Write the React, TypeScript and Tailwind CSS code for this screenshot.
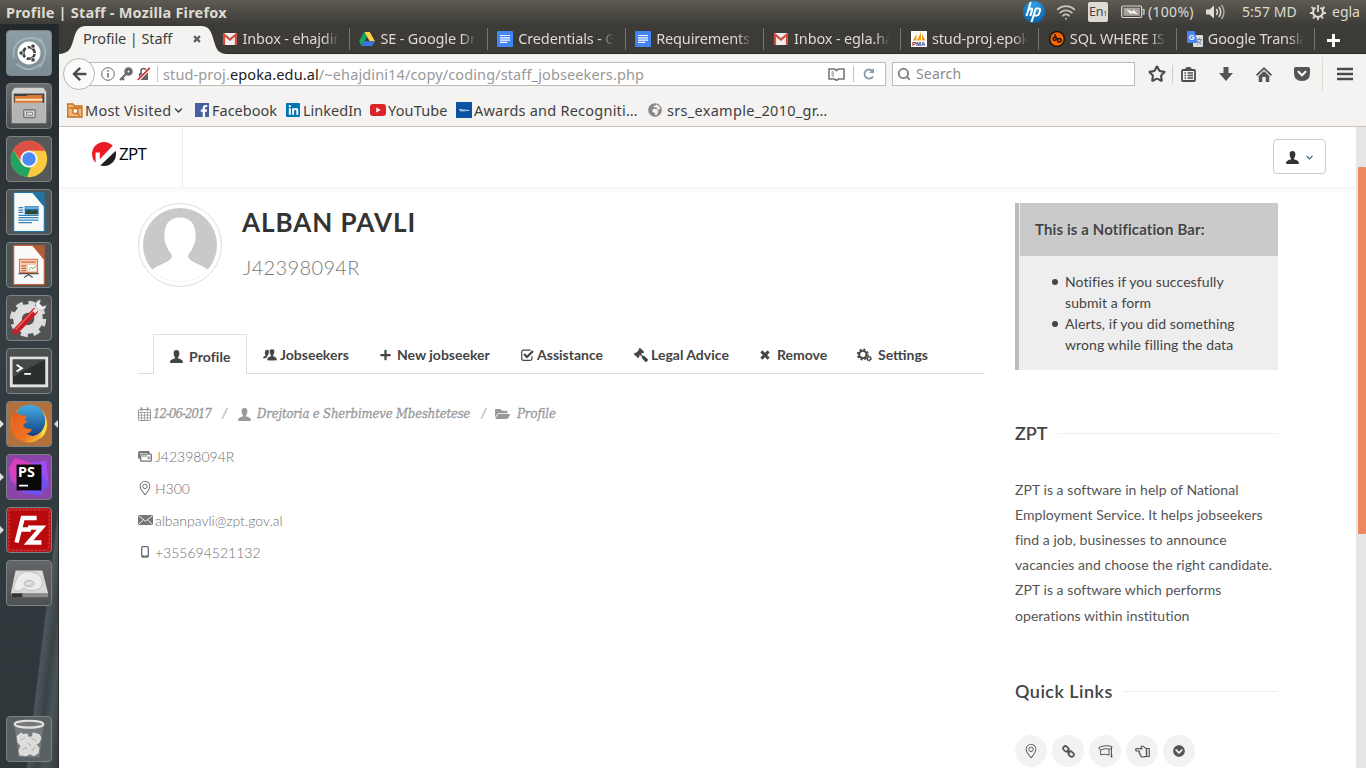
import React from "react";
import {
  FaArrowLeft, FaChevronCircleDown, FaChevronDown, FaFacebookF, FaFolderOpen,
  FaGavel, FaLinkedinIn, FaPlus, FaGlobeAfrica,
} from "react-icons/fa";
import { SlLocationPin } from "react-icons/sl";
import { Search, Star, Wifi } from "lucide-react";

const UI = "font-['Noto_Sans',sans-serif]";

function UserIcon({ className }: { className: string }) {
  return (
    <svg viewBox="0 0 13 13" className={className} fill="currentColor">
      <path d="M6.500 0C8.600 0 9.500 1.300 9.400 3.200C9.300 5.200 8.500 7 7.900 7.400V8.300C9.500 8.900 12.900 9.600 13 12C13 12.700 12.300 13 11.300 13H1.700C.7 13 0 12.700 0 12C.1 9.600 3.500 8.900 5.100 8.300V7.400C4.500 7 3.700 5.200 3.600 3.200C3.500 1.300 4.400 0 6.500 0Z" />
    </svg>
  );
}

function UsersIcon() {
  return (
    <svg viewBox="0 0 14 12" className="h-[12px] w-[14px]" fill="currentColor">
      <path d="M4 .8C5.600 .8 6 1.500 5.800 3C5.900 4.500 5.500 5.500 5 6.200C4.500 6.800 3.500 7.500 3.300 9.300H0C0 7.500 1.500 7 2.600 6.400C1.600 5 1.400 .8 4 .8Z" />
      <path d="M9 0C11.300 0 11.900 1.700 11.500 3.600C11.300 4.700 10.900 5.500 10.300 6.200V7C11.600 7.800 14 8 14 10.800C13.800 11.600 13 11.700 12 11.700H6C4.800 11.700 4.200 11.600 4 10.800C4 8 6.600 7.800 7.700 7V6.200C7.100 5.500 6.700 4.700 6.500 3.600C6.100 1.700 6.700 0 9 0Z" stroke="#fff" strokeWidth=".5" />
    </svg>
  );
}

function CrossIcon({ className }: { className: string }) {
  return (
    <svg viewBox="0 0 11 11" className={className} stroke="currentColor" strokeWidth="3.200">
      <path d="M1.500 1.500L9.500 9.500M9.500 1.500L1.500 9.500" />
    </svg>
  );
}

function GearsIcon() {
  return (
    <svg viewBox="0 0 15 14" className="h-[14px] w-[15px]" fill="none" stroke="currentColor">
      <circle cx="5.800" cy="6.500" r="3.600" strokeWidth="1.900" />
      <circle cx="5.800" cy="6.500" r="5" strokeWidth="1.900" strokeDasharray="2.100 1.827" />
      <circle cx="12" cy="10.600" r="1.700" strokeWidth="1.200" fill="#fff" />
      <circle cx="12" cy="10.600" r="2.500" strokeWidth="1" strokeDasharray="1.200 1.418" />
    </svg>
  );
}

function CalendarIcon() {
  return (
    <svg viewBox="0 0 13 14" className="h-[14px] w-[13px]" fill="none" stroke="currentColor">
      <rect x=".5" y="2.500" width="12" height="11" rx=".7" />
      <path d="M.5 5.500H12.500M.5 8.200H12.500M.5 10.900H12.500M3.500 5.500V13.500M6.500 5.500V13.500M9.500 5.500V13.500" strokeWidth=".8" />
      <path d="M3.500 .3V4M9.500 .3V4" strokeWidth="1.700" />
    </svg>
  );
}

function CheckBoxIcon() {
  return (
    <svg viewBox="0 0 13 12" className="h-[12px] w-[13px]" fill="none" stroke="currentColor">
      <path d="M11 7.200V9.500Q11 11.300 9.200 11.300H2.500Q.7 11.300 .7 9.500V2.900Q.7 1.100 2.500 1.100H9.500" strokeWidth="1.200" />
      <path d="M3 5L6 8L12 2" strokeWidth="2.200" />
    </svg>
  );
}

function WalletIcon() {
  return (
    <svg viewBox="0 0 14 11" className="h-[11px] w-[14px]" fill="none" stroke="#777">
      <path d="M1 7.500V2Q1 1 2 1H10.500V3" strokeWidth="1.900" />
      <rect x="2.700" y="3.200" width="10.600" height="7" rx=".8" strokeWidth="1.300" />
      <path d="M4 5H9" />
      <circle cx="10.800" cy="6.800" r="1.100" strokeWidth=".9" />
    </svg>
  );
}

function MailIcon() {
  return (
    <svg viewBox="0 0 15 10" className="h-[10px] w-[15px]">
      <rect width="15" height="10" fill="#777" />
      <path d="M.5 .7L7.500 6.200L14.500 .7M.5 9.500L5.300 5M14.500 9.500L9.700 5" fill="none" stroke="#fff" strokeWidth=".9" />
    </svg>
  );
}

function PhoneIcon() {
  return (
    <svg viewBox="0 0 8 12" className="h-[12px] w-[8px]">
      <rect x=".7" y=".7" width="6.600" height="10.400" rx="1" fill="#fff" stroke="#6b6b7b" strokeWidth="1.300" />
      <path d="M.8 9.300H7.200V11H.8Z" fill="#6b6b7b" />
      <path d="M3.500 10H4.500" stroke="#fff" strokeWidth=".8" />
    </svg>
  );
}

function ChainIcon() {
  return (
    <svg viewBox="0 0 13 13" className="h-[13px] w-[13px]" fill="none" stroke="currentColor" strokeWidth="1.700">
      <rect x="-3" y="-2.200" width="6" height="4.400" rx="2.200" transform="translate(3.900 3.900) rotate(45)" />
      <rect x="-3" y="-2.200" width="6" height="4.400" rx="2.200" transform="translate(9.100 9.100) rotate(45)" />
      <path d="M4.800 4.800L8.200 8.200" />
    </svg>
  );
}

function CapIcon() {
  return (
    <svg viewBox="0 0 15 13" className="h-[13px] w-[15px]" fill="none" stroke="currentColor" strokeWidth="1">
      <path d="M.6 2.800Q7.500 -.8 14.200 1.800L12.500 4.200Q7 2.800 2.500 5Z" />
      <path d="M2.600 5V9.800Q6.500 8.600 11 10V4.300M13.500 2.600V11.500" />
      <path d="M13.500 9.500V12.500" strokeWidth="1.600" />
    </svg>
  );
}

function HandIcon() {
  return (
    <svg viewBox="0 0 15 13" className="h-[13px] w-[15px]" fill="none" stroke="currentColor" strokeWidth="1.200">
      <path d="M11.500 3.500C9.500 3 8.500 1 7 1C5.800 1 6 2.600 6.800 3.600H1.800C.3 3.600 .3 6 1.800 6H4.500C3.700 7 4 8 4.800 8.300C4.500 9.200 5 10 5.700 10.200C5.700 11.500 6.500 12 8 12C9.500 12 10 11.300 11.500 11.300Z" />
      <path d="M11.500 3.500H14.200V11.500H11.500Z" />
    </svg>
  );
}

/* ---------- title bar ---------- */

function TitleBar() {
  return (
    <header className={`flex h-6 shrink-0 items-center bg-gradient-to-b from-[#5d5b51] to-[#3e3d39] pl-[6px] text-[#dfdbd2] ${UI}`}>
      <span className="-mt-px w-[1017px] whitespace-nowrap text-[14.500px] font-bold leading-6 tracking-[0.2px]">Profile | Staff - Mozilla Firefox</span>
      <svg viewBox="0 0 22 22" className="h-[22px] w-[22px] shrink-0">
        <defs>
          <radialGradient id="hp" cx=".5" cy=".2" r=".9">
            <stop offset="0" stopColor="#2fa0e4" />
            <stop offset="1" stopColor="#075a9f" />
          </radialGradient>
        </defs>
        <circle cx="11" cy="11" r="11" fill="url(#hp)" />
        <g fill="none" stroke="#fff" strokeWidth="2">
          <path d="M7.800 1L3.500 15M5.500 9Q9.500 5.700 9 9.200L7.300 15M13 7L8.500 21M12.800 7.500H15.500Q17.600 7.500 17 9.500L15.900 13Q15.300 14.600 13.500 14.600H10.500" />
        </g>
      </svg>
      <Wifi className="ml-[11px] h-5 w-5 shrink-0 text-[#c9c5bc]" strokeWidth={2.2} />
      <span className="ml-[12px] flex h-5 w-5 shrink-0 items-center justify-center rounded-[2px] bg-[#dfdbd2] text-[12.500px] tracking-[-0.2px] text-[#45443f]">
        En<sub className="text-[7px]">1</sub>
      </span>
      <svg viewBox="0 0 24 14" className="ml-[13px] h-[14px] w-6 shrink-0" fill="none">
        <rect x=".7" y="1" width="20" height="11.500" rx="1.500" stroke="#dfdbd2" strokeWidth="1.200" />
        <rect x="2.500" y="2.800" width="16.400" height="8" fill="#a7a49c" />
        <path d="M21.500 4.500H23V9H21.500" stroke="#dfdbd2" strokeWidth="1.200" />
        <path d="M5 4L12 7L12 4.500L17 9.500L10.500 7.500V9.500Z" fill="#fff" />
      </svg>
      <span className="-mt-px ml-[3px] w-[47px] whitespace-nowrap text-[14px] tracking-[0.3px]">(100%)</span>
      <svg viewBox="0 0 20 16" className="ml-[11px] h-4 w-5 shrink-0" fill="none" stroke="#dfdbd2" strokeWidth="1.500">
        <path d="M0 5.500H3.500L8 1.500V14.500L3.500 10.500H0Z" fill="#dfdbd2" stroke="none" />
        <path d="M10.500 5Q12.500 8 10.500 11M13 3Q16.500 8 13 13" />
        <path d="M15.500 1Q20.500 8 15.500 15" stroke="#aaa79f" />
      </svg>
      <span className="-mt-px ml-[16px] w-[56px] whitespace-nowrap text-[14px] tracking-[0.05px]">5:57 MD</span>
      <svg viewBox="0 0 16 16" className="ml-[12px] h-4 w-4 shrink-0" fill="none" stroke="#dfdbd2">
        <path d="M5.500 3.700A5 5 0 1 0 10.500 3.700" strokeWidth="2" />
        <path d="M8 1V8M1.500 3L3.500 5M14.500 3L12.500 5M0 9H2.500M16 9H13.500M3 14.500L4.500 12.500M13 14.500L11.500 12.500M8 13.500V16" strokeWidth="1.800" />
      </svg>
      <span className="-mt-px ml-[6px] whitespace-nowrap text-[14px]">egla</span>
    </header>
  );
}

/* ---------- launcher ---------- */

function DocIcon({ color, slides }: { color: string; slides?: boolean }) {
  return (
    <svg viewBox="0 0 46 46" className="h-full w-full">
      <path d="M7 2.500H27L39 17V43.500H7Z" fill="#f9f9f9" stroke={color} strokeWidth="1.200" />
      <path d="M26 2H39.500V18Z" fill={color} opacity=".85" />
      {slides ? (
        <g>
          <rect x="13" y="17" width="19" height="14" fill="#f5cdb8" stroke="#cf6b3d" />
          <path d="M15 20H30M15 24H20M15 26.500H20M15 29H20" stroke="#cf6b3d" strokeWidth="1.300" />
          <rect x="22" y="23" width="8" height="6" fill="#fff" />
          <path d="M23 28L25.500 25.500L27 27L30 24" fill="none" stroke="#3ba537" />
          <path d="M12 32H33M22.500 32V34M18 36L22.500 33L27 36" fill="none" stroke="#555" strokeWidth="1.300" />
        </g>
      ) : (
        <g>
          <path d="M12 18.500H17M12 21H17M12 23.500H17M12 26.500H33M12 29H33M12 31.500H33M12 34H26" stroke="#2f86bd" strokeWidth="1.300" />
          <rect x="18.500" y="17" width="14.500" height="8.500" fill="#1f5f8f" />
          <path d="M19 25L23 20.500L26 23L29 20L33 25Z" fill="#2d4a23" />
          <path d="M19 17.500H33V20H19Z" fill="#62b2e6" />
        </g>
      )}
    </svg>
  );
}

const launcher: { bg: string; left?: boolean; right?: boolean; icon: React.ReactNode }[] = [
  {
    bg: "bg-gradient-to-b from-[#8e9da4] to-[#7b8c93]",
    icon: (
      <svg viewBox="0 0 46 46" className="h-full w-full" fill="none">
        <path d="M7 28Q5 9 25 7Q38 8 40 20M10 34Q22 46 36 34M34 8Q46 22 34 38" stroke="#b9c4c8" strokeWidth="2" opacity=".6" />
        <circle cx="23" cy="23" r="12" fill="#fff" />
        <circle cx="23" cy="23" r="6" stroke="#454545" strokeWidth="2.800" strokeDasharray="10.600 2" strokeDashoffset="-1" />
        <g fill="#454545" stroke="#fff" strokeWidth=".8">
          <circle cx="14.800" cy="23" r="2.300" /><circle cx="27.200" cy="15.800" r="2.300" /><circle cx="27.200" cy="30.200" r="2.300" />
        </g>
      </svg>
    ),
  },
  {
    bg: "bg-gradient-to-b from-[#6a6d6e] to-[#4c4f50]",
    icon: (
      <svg viewBox="0 0 46 46" className="h-full w-full">
        <path d="M5 8L8 4H38L41 8V40H5Z" fill="#d4d4d2" />
        <rect x="7" y="10" width="32" height="14" fill="#424242" />
        <path d="M8 12.500H20L22 11.500H37V26H8Z" fill="#dd7b35" />
        <path d="M9 15.500H37V17.500H9Z" fill="#fbe0bd" />
        <path d="M6 19.500H40L41 41H5Z" fill="#b5b5b3" />
        <rect x="17.500" y="27" width="12" height="8" rx="1" fill="#ddd" stroke="#777" strokeWidth="1.500" />
        <rect x="20.500" y="29.500" width="6" height="3" fill="#eee" stroke="#777" />
      </svg>
    ),
  },
  {
    bg: "bg-[#555859]",
    icon: (
      <svg viewBox="0 0 46 46" className="h-full w-full">
        <circle cx="23" cy="23" r="19" fill="#fcca3e" />
        <path d="M6.500 13.500A19 19 0 0 1 40 14.500H23Q15 15 14.500 25Z" fill="#dd5144" />
        <path d="M6.500 13.500L15 28Q18 32 25 31.500L21 42A19 19 0 0 1 6.500 13.500Z" fill="#1fa463" />
        <circle cx="23" cy="23" r="9" fill="#f5f5f5" />
        <circle cx="23" cy="23" r="7" fill="#4c8bf5" />
      </svg>
    ),
  },
  { bg: "bg-[#4e5354]", icon: <DocIcon color="#1f78ad" /> },
  { bg: "bg-[#4e5354]", icon: <DocIcon color="#bf5f33" slides /> },
  {
    bg: "bg-[#505455]",
    icon: (
      <svg viewBox="0 0 46 46" className="h-full w-full">
        <circle cx="22" cy="24" r="16" fill="none" stroke="#d9d9d9" strokeWidth="6" strokeDasharray="7 5.560" />
        <circle cx="22" cy="24" r="11" fill="none" stroke="#dedede" strokeWidth="9" />
        <path d="M9 37L29 16" stroke="#c52026" strokeWidth="6.500" strokeLinecap="round" />
        <path d="M9 35L27 16" stroke="#ee6a66" strokeWidth="1.300" />
        <path d="M28 17L35 10" stroke="#e4e4e4" strokeWidth="4" />
        <path d="M35 4A5.500 5.500 0 1 0 41 10L37 11L34 8Z" fill="#efefef" stroke="#aaa" strokeWidth=".6" />
      </svg>
    ),
  },
  {
    bg: "bg-[#4a4f50]",
    icon: (
      <svg viewBox="0 0 46 46" className="h-full w-full">
        <rect x="3" y="8" width="40" height="32" fill="#e2e2e2" />
        <rect x="6" y="11" width="34" height="26" fill="#2c2f30" />
        <path d="M6 11H40L6 29Z" fill="#45494a" />
        <path d="M10 16.500L15.500 20L10 23.500M18 26H25" fill="none" stroke="#fff" strokeWidth="2" />
      </svg>
    ),
  },
  {
    bg: "bg-[#b0713f]", left: true, right: true,
    icon: (
      <svg viewBox="0 0 46 46" className="h-full w-full">
        <defs>
          <linearGradient id="fx" x1="0" y1="0" x2="1" y2="1">
            <stop offset="0" stopColor="#e85a1b" /><stop offset=".65" stopColor="#ef7422" /><stop offset="1" stopColor="#fbd338" />
          </linearGradient>
          <linearGradient id="globe" x1="0" y1="0" x2="0" y2="1">
            <stop offset="0" stopColor="#45ade2" /><stop offset="1" stopColor="#123d80" />
          </linearGradient>
        </defs>
        <circle cx="23" cy="23" r="19" fill="#f3a12a" />
        <circle cx="24" cy="19.500" r="16.500" fill="url(#globe)" />
        <path d="M36 8Q43 17 38 28Q33 37 25 36Q39 43 42 25Q42 14 36 8Z" fill="#fbdc45" />
        <path d="M9 8Q10 12 12 13L19 14Q22 15 18 18Q22 19 20 22Q17 22 17 25Q20 29 26 28Q25 33 20 33Q28 39 37 31Q33 44 20 42Q6 40 4.500 27Q4 16 9 8Z" fill="url(#fx)" />
      </svg>
    ),
  },
  {
    bg: "bg-[#8a45a8]", left: true,
    icon: (
      <svg viewBox="0 0 46 46" className="h-full w-full">
        <path d="M2 14L8 3L25 8L41 6L43 25L36 42L17 39L4 27Z" fill="#9d4cf2" />
        <path d="M2 14L8 3L25 8L24 20L7 30Z" fill="#d840b8" />
        <path d="M35 20L44 30L34 42L18 40Z" fill="#6f51ef" />
        <rect x="10" y="10" width="26" height="27" fill="#080808" />
        <text x="11.500" y="23.500" fill="#fff" fontSize="15" fontWeight="700" className="font-['Noto_Sans',sans-serif]">PS</text>
        <path d="M12.500 32H22" stroke="#fff" strokeWidth="1.800" />
      </svg>
    ),
  },
  {
    bg: "bg-[#b3181b]", left: true,
    icon: (
      <svg viewBox="0 0 46 46" className="h-full w-full">
        <rect x="2" y="2" width="42" height="42" rx="2" fill="#b80a0c" stroke="#d6484b" strokeDasharray="2.500 1.500" />
        <path d="M10 36L16.500 10.500H31M13 22.500H25M22 20.500H36L22.500 36H36" fill="none" stroke="#fff" strokeWidth="4.600" />
      </svg>
    ),
  },
  {
    bg: "bg-gradient-to-b from-[#626566] to-[#4d5152]",
    icon: (
      <svg viewBox="0 0 46 46" className="h-full w-full">
        <path d="M9 10H37L43 34H4Z" fill="#d9d9d8" />
        <path d="M11 17Q14 11 23 11Q35 12 37 21Q38 30 27 31Q21 31 17 28Q14 33 8 31Q5 28 11 17Z" fill="#ececec" stroke="#bcbcbc" />
        <ellipse cx="23" cy="23.500" rx="5" ry="3" fill="#ddd" stroke="#aaa" />
        <path d="M4 34H43V38H5Z" fill="#8a8a8a" />
        <path d="M5 34H16V38H5Z" fill="#333" />
      </svg>
    ),
  },
];

function TrashIcon() {
  return (
    <svg viewBox="0 0 46 46" className="h-full w-full">
      <path d="M8 8H38L34 42H12Z" fill="#8c9192" opacity=".55" />
      <ellipse cx="23" cy="7.500" rx="15" ry="3.600" fill="#777b7c" stroke="#e2e2e0" strokeWidth="2.200" />
      <path d="M10 20L15 16L17 18L21 17L23 21L26 20L27 16L34 18L36 22L34 27L31 29L34 32L33 38L28 41L24 39L20 41L13 40L12 35L14 30L11 27Z" fill="#dcdcda" />
      <path d="M14 24L19 22M25 22L31 25M16 34L21 32M26 35L30 31M22 27L25 30" stroke="#bbb" strokeWidth="1.300" />
    </svg>
  );
}

const tile = "h-[46px] w-[46px] overflow-hidden rounded-[4px] border border-[#7d8384]";

function Launcher() {
  return (
    <aside className="flex w-[59px] shrink-0 flex-col border-r border-[#252b2e] bg-[linear-gradient(97deg,transparent_0_66%,rgba(120,130,136,.42)_68%,rgba(75,82,86,.4)_78%,rgba(120,130,136,.38)_86%,rgba(60,66,70,.5)_100%),linear-gradient(#23282b,#343e42_40%,#2d3639)] bg-[length:100%_300px,100%_100%] bg-bottom bg-no-repeat pb-[6px] pt-[6px]">
      <div className="flex flex-col gap-[7px]">
        {launcher.map((item, i) => (
          <div key={i} className="flex items-center">
            <span className="w-[6px]">
              {item.left && <svg viewBox="0 0 4 8" className="h-2 w-1"><path d="M0 0L4 4L0 8Z" fill="#ddd" /></svg>}
            </span>
            <div className={`${tile} ${item.bg}`}>{item.icon}</div>
            <span className="ml-[2px] w-1">
              {item.right && <svg viewBox="0 0 4 8" className="h-2 w-1"><path d="M4 0L0 4L4 8Z" fill="#ddd" /></svg>}
            </span>
          </div>
        ))}
      </div>
      <div className={`${tile} ml-[6px] mt-auto bg-[#596063]`}><TrashIcon /></div>
    </aside>
  );
}

/* ---------- browser chrome ---------- */

const Gmail = (
  <svg viewBox="0 0 16 12" className="h-3 w-4"><rect x="1" width="14" height="12" rx="1" fill="#eee" /><path d="M2 12V1.500L8 6.500L14 1.500V12" fill="none" stroke="#d54b3d" strokeWidth="2.200" /></svg>
);
const Drive = (
  <svg viewBox="0 0 16 14" className="h-[14px] w-4"><path d="M5.300 0H10.700L16 9.300H10.700Z" fill="#ffcf48" /><path d="M5.300 0L0 9.300L2.700 14L8 4.700Z" fill="#11a861" /><path d="M5.400 9.300H16L13.300 14H2.700Z" fill="#3777e3" /></svg>
);
const Docs = (
  <svg viewBox="0 0 16 16" className="h-4 w-4"><rect width="16" height="16" rx="1" fill="#4285f4" /><path d="M3 4.500H13M3 6.800H13M3 9.100H13M3 11.400H10" stroke="#fff" strokeWidth="1.200" /></svg>
);
const Pma = (
  <svg viewBox="0 0 16 16" className="h-4 w-4"><rect width="16" height="16" fill="#fff" /><path d="M2 9.500L5.500 3V9.500ZM6 9.500L10 1V9.500ZM11 3L14.500 9.500H11Z" fill="#f79a1c" /><text x="1" y="15" fontSize="6" fontWeight="700" fill="#333366" className="font-['Liberation_Sans',sans-serif]">PMA</text></svg>
);
const Sql = (
  <svg viewBox="0 0 16 16" className="h-4 w-4"><circle cx="8" cy="8" r="8" fill="#111" /><circle cx="8" cy="8" r="6.700" fill="#fa6400" /><g fill="none" stroke="#111" strokeWidth="1.400"><circle cx="5.600" cy="7.800" r="1.600" /><circle cx="10.300" cy="9.300" r="1.800" /><path d="M5.500 3L8 8" /></g></svg>
);
const Translate = (
  <svg viewBox="0 0 16 16" className="h-4 w-4"><rect x="6" y="4" width="10" height="12" rx="1" fill="#dcdcdc" /><path d="M1 0H7.500L11 12H1Q0 12 0 11V1Q0 0 1 0Z" fill="#4a86ee" /><text x="2" y="9" fontSize="7" fontWeight="700" fill="#fff" className="font-['Liberation_Sans',sans-serif]">G</text><path d="M10 8.500H15M12.500 7V8.500M10.500 13.500Q14 11.500 14 8.500M11 10L14.500 13.500" fill="none" stroke="#708da5" /></svg>
);

const tabs: [React.ReactNode, string][] = [
  [Gmail, "Inbox - ehajdin"],
  [Drive, "SE - Google Dr"],
  [Docs, "Credentials - G"],
  [Docs, "Requirements"],
  [Gmail, "Inbox - egla.ha"],
  [Pma, "stud-proj.epok"],
  [Sql, "SQL WHERE IS"],
  [Translate, "Google Transla"],
];

function TabStrip() {
  return (
    <div className="flex h-[30px] border-b border-[#2b2a27] bg-[#3c3b37] text-[14.500px]">
      <div className="relative w-[153px] shrink-0">
        <svg viewBox="0 0 170 28" className="absolute left-0 top-[2px] z-10 h-[28px] w-[170px]">
          <path d="M0 28C11 27 12 22 15 12C17 5 19 0 27 0H142C150 0 152 5 154 12C157 22 158 27 167 28Z" fill="#f4f3f1" />
        </svg>
        <div className="relative z-20 flex h-full items-center pl-6 pt-px text-[#3f3f3f]">
          <span className="w-[110px] whitespace-nowrap tracking-[-0.1px]">Profile | Staff</span>
          <CrossIcon className="h-[8px] w-[8px] text-[#5f5f5f]" />
        </div>
      </div>
      {tabs.map(([icon, label], i) => (
        <div key={i} className="flex h-full w-[137.900px] shrink-0 items-center pl-[9.500px] pt-px">
          <span className="w-4 shrink-0">{icon}</span>
          <span className="ml-[5px] w-[99px] whitespace-nowrap tracking-[-0.15px] text-[#dedad2] [mask-image:linear-gradient(90deg,#000_82%,transparent_97%)]">{label}</span>
          <span className="ml-auto h-[22px] w-px bg-[#77756f]" />
        </div>
      ))}
      <svg viewBox="0 0 13 13" className="ml-[12px] mt-[10px] h-[13px] w-[13px]" stroke="#fff" strokeWidth="3"><path d="M6.500 0V13M0 6.500H13" /></svg>
    </div>
  );
}

function NavBar() {
  return (
    <div className="flex h-10 items-center pl-[4px]">
      <div className="z-10 flex h-8 w-8 shrink-0 items-center justify-center rounded-full border border-[#b9b7b3] bg-[#fbfbfa]">
        <FaArrowLeft className="h-4 w-[15px] text-[#4c4c4c]" />
      </div>
      <div className="-ml-[6px] flex h-6 w-[797px] shrink-0 items-center border border-[#bdbbb8] bg-white">
        <svg viewBox="0 0 14 14" className="ml-[11px] h-[14px] w-[14px] shrink-0" fill="none" stroke="#666">
          <circle cx="7" cy="7" r="6.300" /><path d="M7 6V10.500M7 3.300V4.800" strokeWidth="1.500" />
        </svg>
        <svg viewBox="0 0 14 14" className="ml-[4px] h-[14px] w-[14px] shrink-0" fill="none" stroke="#6b6b6b">
          <circle cx="9.500" cy="4.500" r="2.600" strokeWidth="3.400" /><path d="M7.500 6.500L1 13M3 11L5 13" strokeWidth="2.200" />
        </svg>
        <svg viewBox="0 0 14 14" className="ml-[4px] h-[14px] w-[14px] shrink-0">
          <path d="M2 6H11V13H2Z" fill="#666" /><path d="M4 6V4Q4 1.500 6.500 1.500T9.300 4V6" fill="none" stroke="#666" strokeWidth="1.600" />
          <path d="M.8 13.500L13 .8" stroke="#fff" strokeWidth="3" /><path d="M.8 13L12.800 .8" stroke="#d92a2a" strokeWidth="1.700" />
        </svg>
        <span className="ml-[6px] h-4 w-px bg-[#c8c8c8]" />
        <span className="ml-[5px] w-[660px] shrink-0 whitespace-nowrap text-[14.5px] leading-6 tracking-[0.12px] text-[#999]">
          stud-proj.<span className="text-[#222]">epoka.edu.al</span>/~ehajdini14/copy/coding/staff_jobseekers.php
        </span>
        <svg viewBox="0 0 17 13" className="ml-[5px] h-[13px] w-[17px] shrink-0" fill="none" stroke="#777" strokeWidth="1.600">
          <path d="M1 1H6.500L8.500 2.500L10.500 1H16V11H10.500L8.500 12.500L6.500 11H1Z" /><path d="M3.500 4H6M3.500 6H6M3.500 8H6" strokeWidth="1" />
        </svg>
        <span className="ml-2 h-4 w-px bg-[#c0c0c0]" />
        <svg viewBox="0 0 12 12" className="ml-[9px] h-3 w-3 shrink-0" fill="none" stroke="#8b98a3" strokeWidth="1.800">
          <path d="M10 8.500A4.600 4.600 0 1 1 9.500 3" /><path d="M11 0V5H6Z" fill="#8b98a3" stroke="none" />
        </svg>
      </div>
      <div className="ml-[6px] flex h-6 w-[243px] shrink-0 items-center border border-[#bdbbb8] bg-white pl-[4px]">
        <Search className="h-[14px] w-[14px] text-[#8b8b8b]" strokeWidth={3.5} />
        <span className="ml-[5px] text-[14px] leading-6 tracking-[0.15px] text-[#8b8b8b]">Search</span>
      </div>
      <div className="flex shrink-0 items-center text-[#4b4b4b]">
        <Star className="ml-[13px] h-[18px] w-[18px]" strokeWidth={2.8} />
        <span className="ml-[6px] h-[18px] w-px bg-[#cfcdca]" />
        <svg viewBox="0 0 15 15" className="ml-[8px] h-[15px] w-[15px]" fill="none" stroke="currentColor">
          <rect x="1" y="3" width="13" height="11" rx="1" strokeWidth="1.800" /><path d="M5 2.500Q5 .8 7.500 .8T10 2.500" strokeWidth="1.700" />
          <path d="M3.500 6H5M6.500 6H12M3.500 8.500H5M6.500 8.500H12M3.500 11H5M6.500 11H12" strokeWidth="1.300" />
        </svg>
        <svg viewBox="0 0 14 14" className="ml-[23px] h-[14px] w-[14px]"><path d="M4.500 0H9.500V6H14L7 14L0 6H4.500Z" fill="#555" /></svg>
        <svg viewBox="0 0 16 15" className="ml-[23px] h-[15px] w-4" fill="#555"><path d="M8 0L16 7.600L14.800 8.900L8 2.600L1.200 8.900L0 7.600Z" /><path d="M8 4L13.300 9V15H9.700V10H6.300V15H2.700V9Z" /></svg>
        <svg viewBox="0 0 16 14" className="ml-[22px] h-[14px] w-4">
          <path d="M1.500 0H14.500Q16 0 16 1.500V6Q16 14 8 14T0 6V1.500Q0 0 1.500 0Z" fill="#555" /><path d="M4.500 4.800L8 8.300L11.500 4.800" fill="none" stroke="#fff" strokeWidth="2" strokeLinecap="round" />
        </svg>
        <span className="ml-[12px] h-[34px] w-px bg-[#dddbd8]" />
        <svg viewBox="0 0 16 14" className="ml-[14px] h-[14px] w-4" stroke="#4b4b4b" strokeWidth="2.600"><path d="M0 2H16M0 7H16M0 12H16" /></svg>
      </div>
    </div>
  );
}

function Bookmarks() {
  return (
    <div className="flex h-[33px] items-center border-b border-[#c9c3bb] pl-2 text-[14.500px] leading-8 text-[#3f3f3f]">
      <svg viewBox="0 0 16 15" className="h-[15px] w-4"><path d="M.7 1H6L7.500 3H15V14H.7Z" fill="#f1b576" stroke="#c5701e" strokeWidth="1.300" /><circle cx="8.300" cy="8" r="2.600" fill="#fff" stroke="#c5701e" strokeWidth="1.300" /><path d="M10 10L12.500 12.500M2 5H14" stroke="#c5701e" strokeWidth="1.300" /></svg>
      <span className="ml-[2px] w-[87px] whitespace-nowrap tracking-[0.25px]">Most Visited</span>
      <FaChevronDown className="ml-[2px] h-[9px] w-[9px]" />
      <span className="ml-[12px] flex h-[14px] w-[14px] items-end justify-end bg-[#4460a0] text-white"><FaFacebookF className="h-3 w-[10px]" /></span>
      <span className="ml-[3px] w-[66px] whitespace-nowrap">Facebook</span>
      <span className="ml-[8px] flex h-[14px] w-[14px] items-center justify-center rounded-[1px] bg-[#0077b5] text-white"><FaLinkedinIn className="h-[11px] w-[11px]" /></span>
      <span className="ml-[3px] w-[60px] whitespace-nowrap">LinkedIn</span>
      <svg viewBox="0 0 16 12" className="ml-[7px] h-3 w-4"><rect width="16" height="12" rx="3" fill="#d9252a" /><path d="M6.300 3.500V8.500L10.700 6Z" fill="#fff" /></svg>
      <span className="ml-[2px] w-[61px] whitespace-nowrap tracking-[0.15px]">YouTube</span>
      <svg viewBox="0 0 16 16" className="ml-[7px] h-4 w-4"><rect width="16" height="16" fill="#0b53a0" /><path d="M3 7.500L7 8L13 8.500M4 8.800H9" fill="none" stroke="#c5dbf0" /></svg>
      <span className="ml-[2px] w-[165px] whitespace-nowrap tracking-[0.23px]">Awards and Recogniti…</span>
      <FaGlobeAfrica className="ml-[9px] h-[14px] w-[14px] text-[#888]" />
      <span className="ml-[5px] whitespace-nowrap tracking-[0.3px]">srs_example_2010_gr…</span>
    </div>
  );
}

/* ---------- page ---------- */

function SiteHeader() {
  return (
    <div className="flex h-[60px] shrink-0 justify-between bg-white shadow-[0_2px_5px_rgba(0,0,0,.06)]">
      <div className="flex w-[124px] border-r border-[#eee] pl-[33px] pt-[15px]">
        <svg viewBox="0 0 24 24" className="h-[24px] w-[24px]">
          <defs><clipPath id="logo"><circle cx="12" cy="12" r="12" /></clipPath></defs>
          <g clipPath="url(#logo)">
            <path d="M0 0H24.300L7.800 17.200V10.500H3.600V24H0Z" fill="#ed1c24" />
            <path d="M24 8.500V24H7.800Z" fill="#231f20" />
          </g>
        </svg>
        <span className="-mt-px ml-[3px] text-[17px] leading-[26px] tracking-[-0.7px] text-black font-['Open_Sans',sans-serif]">ZPT</span>
      </div>
      <button className="mr-[30px] mt-3 flex h-[35px] w-[53px] items-center justify-center gap-[7px] rounded-[4px] border border-[#ccc] bg-white pt-px text-[#333]">
        <UserIcon className="h-[13px] w-[13px]" />
        <svg viewBox="0 0 7 5" className="h-[5px] w-[7px]" fill="none" stroke="#376077" strokeWidth="1.200"><path d="M.5 .8L3.500 3.800L6.500 .8" /></svg>
      </button>
    </div>
  );
}

function ProfileHeading() {
  return (
    <div className="flex h-[84px] gap-5">
      <div className="h-[84px] w-[84px] rounded-full border border-[#ddd] p-1">
        <svg viewBox="0 0 74 74" className="h-full w-full">
          <defs><clipPath id="avatar"><circle cx="37" cy="37" r="37" /></clipPath></defs>
          <g clipPath="url(#avatar)">
            <rect width="74" height="74" fill="#c9c9c9" />
            <path d="M37 9.500C48 9.500 53 17 52.500 29C53 33 51 37 49.500 40C48 44 45 46 45 48C45.500 54 56 55 64.500 61.500V76H9.500V61.500C18 55 28.500 54 29 48C29 46 26 44 24.500 40C23 37 21 33 21.500 29C21 17 26 9.500 37 9.500Z" fill="#fff" />
          </g>
        </svg>
      </div>
      <div className="pt-[4px] font-['Lato',sans-serif]">
        <h1 className="whitespace-nowrap text-[26px] font-bold leading-[30px] tracking-[0.970px] text-[#333]">ALBAN PAVLI</h1>
        <p className="ml-px mt-[15px] whitespace-nowrap text-[20px] font-light leading-[30px] tracking-[0.360px] text-[#777]">J42398094R</p>
      </div>
    </div>
  );
}

function ProfileTabs() {
  return (
    <nav className="mt-[47px] flex h-10 w-[847px] border-b border-[#ddd] pl-[15px] text-[14px] font-bold text-[#444]">
      <div className="-mb-px flex h-10 w-[94px] shrink-0 items-center border border-b-0 border-[#ddd] bg-white pl-4 pt-[3px]">
        <UserIcon className="mt-px h-[13px] w-[13px]" /><span className="ml-[6px] tracking-[0.1px]">Profile</span>
      </div>
      <div className="flex items-center whitespace-nowrap pl-4 pt-[2px]">
        <span className="flex w-[117px] items-center gap-[3px]"><UsersIcon />Jobseekers</span>
        <span className="flex w-[141px] items-center gap-[6px]"><FaPlus className="h-[12px] w-[11px]" />New jobseeker</span>
        <span className="flex w-[113px] items-center gap-[3px]"><CheckBoxIcon />Assistance</span>
        <span className="flex w-[126px] items-center gap-[3px]"><FaGavel className="h-[14px] w-[14px] -scale-x-100" />Legal Advice</span>
        <span className="flex w-[97px] items-center gap-[7px]"><CrossIcon className="h-[10px] w-[10px]" />Remove</span>
        <span className="flex items-center gap-[6px]"><GearsIcon />Settings</span>
      </div>
    </nav>
  );
}

function MetaLine() {
  return (
    <div className="mt-[30px] flex h-5 items-center whitespace-nowrap text-[13px] italic text-[#999] [-webkit-text-stroke:0.3px_#999] font-['DejaVu_Serif_Condensed','DejaVu_Serif',serif]">
      <CalendarIcon />
      <span className="ml-[2px] w-[69px] tracking-[-0.950px]">12-06-2017</span>
      <span className="w-[16px] font-['Lato'] text-[#ccc]">/</span>
      <UserIcon className="h-[13px] w-[13px]" />
      <span className="ml-[6px] w-[224px] tracking-[-0.150px]">Drejtoria e Sherbimeve Mbeshtetese</span>
      <span className="w-[14px] font-['Lato'] text-[#ccc]">/</span>
      <FaFolderOpen className="h-[14px] w-[15px]" />
      <span className="ml-[7px]">Profile</span>
    </div>
  );
}

function Contacts() {
  const rows: [React.ReactNode, string][] = [
    [<WalletIcon />, "J42398094R"],
    [<SlLocationPin className="h-[14px] w-[14px] text-[#666]" />, "H300"],
    [<MailIcon />, "albanpavli@zpt.gov.al"],
    [<span className="ml-[3px] block"><PhoneIcon /></span>, "+355694521132"],
  ];
  return (
    <div className="mt-[16px] text-[14px] font-light text-[#6f6f6f]">
      {rows.map(([icon, label]) => (
        <p key={label} className="flex h-8 items-center whitespace-nowrap">
          <span className="w-[17px]">{icon}</span><span>{label}</span>
        </p>
      ))}
    </div>
  );
}

function SectionTitle({ children }: { children: React.ReactNode }) {
  return (
    <h4 className="flex h-6 items-center gap-[10px] whitespace-nowrap text-[18px] font-semibold text-[#444]">
      {children}<span className="h-px flex-1 bg-[#eee]" />
    </h4>
  );
}

function Sidebar() {
  return (
    <aside className="w-[263px]">
      <div className="h-[167px] border-l-4 border-[#bbb] bg-[#eee] pl-px">
        <div className="flex h-[53px] items-center bg-[#cacaca] pl-[15px] text-[15px] font-bold tracking-[0.110px] text-[#444] [text-shadow:1px_1px_1px_#fff5]">This is a Notification Bar:</div>
        <ul className="ml-8 mt-[15px] whitespace-nowrap text-[14px] leading-[21px] tracking-[0.080px] text-[#444]">
          {[["Notifies if you succesfully", "submit a form"], ["Alerts, if you did something", "wrong while filling the data"]].map(([first, second]) => (
            <li key={first} className="flex">
              <span className="mr-[7px] mt-[8px] h-[6px] w-[6px] rounded-full bg-[#444]" />
              <span>{first}<br />{second}</span>
            </li>
          ))}
        </ul>
      </div>
      <div className="mt-[51px]"><SectionTitle>ZPT</SectionTitle></div>
      <p className="mt-[31.500px] whitespace-nowrap text-[14px] leading-[25.200px] tracking-[0.050px] text-[#555]">
        ZPT is a software in help of National<br />Employment Service. It helps jobseekers<br />find a job, businesses to announce<br />
        vacancies and choose the right candidate.<br />ZPT is a software which performs<br />operations within institution
      </p>
      <div className="mt-[51.300px]"><SectionTitle><span className="tracking-[0.480px]">Quick Links</span></SectionTitle></div>
      <div className="mt-[32px] flex gap-[5px] text-[#555]">
        {[
          <SlLocationPin className="h-[14px] w-[14px]" />,
          <ChainIcon />,
          <CapIcon />,
          <HandIcon />,
          <FaChevronCircleDown className="h-[12px] w-[12px]" />,
        ].map((icon, i) => (
          <span key={i} className="flex h-8 w-8 items-center justify-center rounded-full bg-[#f2f2f2]">{icon}</span>
        ))}
      </div>
    </aside>
  );
}

export default function App() {
  return (
    <div className="flex h-[768px] w-[1366px] flex-col overflow-hidden bg-white">
      <TitleBar />
      <div className="flex min-h-0 flex-1">
        <Launcher />
        <div className="flex min-w-0 flex-1 flex-col">
          <div className={`h-[103px] shrink-0 bg-[#f4f3f1] ${UI}`}>
            <TabStrip />
            <NavBar />
            <Bookmarks />
          </div>
          <div className="flex min-h-0 flex-1">
            <main className="w-[1297px] overflow-hidden bg-white font-['Lato',sans-serif]">
              <SiteHeader />
              <div className="flex gap-[30px] pl-[79px] pt-4">
                <section className="w-[847px]">
                  <ProfileHeading />
                  <ProfileTabs />
                  <MetaLine />
                  <Contacts />
                </section>
                <Sidebar />
              </div>
            </main>
            <div className="w-[10px] bg-[#e6e6e6] pl-[2px] pt-10">
              <div className="h-[367px] w-2 rounded-[1px] bg-[#f0885f]" />
            </div>
          </div>
        </div>
      </div>
    </div>
  );
}
